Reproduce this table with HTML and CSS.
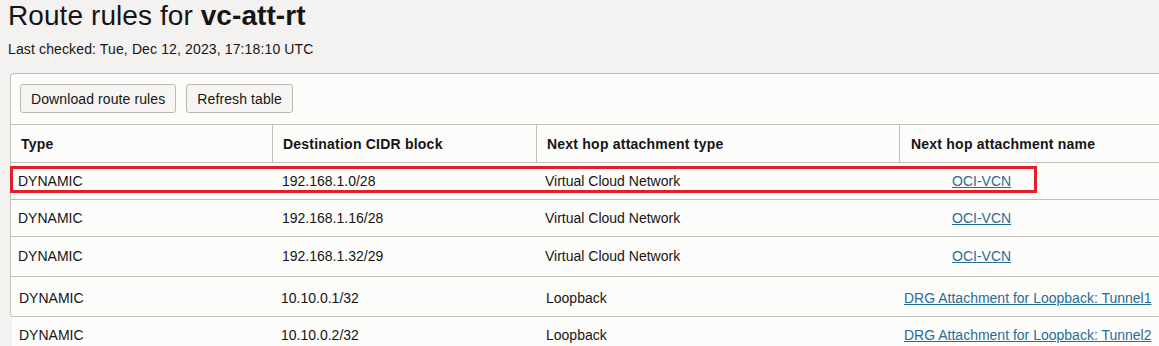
FILE: index.html
```html
<!DOCTYPE html>
<html lang="en">
<head>
  <meta charset="UTF-8" />
  <title>Route rules for vc-att-rt</title>
  <link rel="stylesheet" href="styles.css">
</head>
<body>
  <div class="page-header">
    <h1 class="title">Route rules for <b>vc-att-rt</b></h1>
    <div class="checked">Last checked: Tue, Dec 12, 2023, 17:18:10 UTC</div>
  </div>

  <div class="panel">
    <div class="toolbar">
      <button class="btn">Download route rules</button>
      <button class="btn">Refresh table</button>
    </div>

    <div class="row head">
      <div class="cell">Type</div>
      <div class="cell">Destination CIDR block</div>
      <div class="cell">Next hop attachment type</div>
      <div class="cell">Next hop attachment name</div>
    </div>

    <div class="row vcn short highlighted">
      <div class="cell">DYNAMIC</div>
      <div class="cell">192.168.1.0/28</div>
      <div class="cell">Virtual Cloud Network</div>
      <div class="cell"><a href="#">OCI-VCN</a></div>
      <div class="mark"></div>
    </div>
    <div class="row vcn short">
      <div class="cell">DYNAMIC</div>
      <div class="cell">192.168.1.16/28</div>
      <div class="cell">Virtual Cloud Network</div>
      <div class="cell"><a href="#">OCI-VCN</a></div>
    </div>
    <div class="row vcn tall">
      <div class="cell">DYNAMIC</div>
      <div class="cell">192.168.1.32/29</div>
      <div class="cell">Virtual Cloud Network</div>
      <div class="cell"><a href="#">OCI-VCN</a></div>
    </div>
    <div class="row loop tall">
      <div class="cell">DYNAMIC</div>
      <div class="cell">10.10.0.1/32</div>
      <div class="cell">Loopback</div>
      <div class="cell"><a href="#">DRG Attachment for Loopback: Tunnel1</a></div>
    </div>
  </div>

  <div class="row loop extra">
    <div class="cell">DYNAMIC</div>
    <div class="cell">10.10.0.2/32</div>
    <div class="cell">Loopback</div>
    <div class="cell"><a href="#">DRG Attachment for Loopback: Tunnel2</a></div>
  </div>
</body>
</html>
```

FILE: styles.css
```css
body {
  font-family: "Liberation Sans", Arial, sans-serif;
  margin: 0;
  background-color: #f3f2f1;
  color: #161513;
  overflow: hidden;
}
.page-header {
  padding-left: 8px;
}
.title {
  margin: 0;
  font-size: 28px;
  font-weight: normal;
  line-height: 32px;
  letter-spacing: 0.08px;
}
.checked {
  margin-top: 8px;
  font-size: 14px;
  line-height: 18px;
  letter-spacing: 0.13px;
}
.panel {
  margin: 15px 0 0 10px;
  width: 1200px;
  background-color: #fcfcfb;
  border: 1px solid #c3beb8;
  border-right: none;
  border-bottom: none;
  border-radius: 4px 0 0 4px;
}
.toolbar {
  display: flex;
  gap: 10px;
  padding: 10px 9px 11px;
  border-bottom: 1px solid #c3beb8;
}
.btn {
  height: 29px;
  padding: 0 10px;
  font-family: inherit;
  font-size: 14px;
  letter-spacing: 0.1px;
  color: #161513;
  background-color: #f6f5f3;
  border: 1px solid #bcb7b1;
  border-radius: 3px;
}
.row {
  position: relative;
  display: grid;
  grid-template-columns: 261px 264px 363px 1fr;
  align-items: center;
  box-sizing: border-box;
  font-size: 14px;
  line-height: 16px;
  border-bottom: 1px solid #c3beb8;
}
.row.head {
  height: 38px;
  font-weight: bold;
  letter-spacing: 0.22px;
  align-items: stretch;
}
.row.head .cell {
  display: flex;
  align-items: center;
  padding-left: 10px;
}
.row.head .cell + .cell {
  border-left: 1px solid #c3beb8;
}
.row.head .cell:nth-child(4) {
  padding-left: 11px;
}
.row.short {
  height: 37px;
}
.row.tall {
  height: 40px;
}
.row.vcn.tall {
  padding-bottom: 2px;
}
.row.vcn .cell:nth-child(1) { padding-left: 7px; }
.row.vcn .cell:nth-child(2) { padding-left: 10px; }
.row.vcn .cell:nth-child(3) { padding-left: 9px; }
.row.vcn .cell:nth-child(4) { padding-left: 53px; }
.row.loop {
  padding-top: 3px;
}
.row.loop .cell:nth-child(1) { padding-left: 8px; }
.row.loop .cell:nth-child(2) { padding-left: 9px; }
.row.loop .cell:nth-child(3) { padding-left: 10px; }
.row.loop .cell:nth-child(4) { padding-left: 5px; }
.row.extra {
  margin-left: 12px;
  height: 36px;
  padding-top: 0;
  grid-template-columns: 260px 264px 363px 1fr;
  background-color: #fcfcfb;
  border-bottom: none;
  width: 1200px;
}
.row.extra .cell:nth-child(1) { padding-left: 7px; }
.cell {
  white-space: nowrap;
}
.cell a {
  color: #2a6d94;
  text-decoration: underline;
}
.mark {
  position: absolute;
  left: -1px;
  top: 3px;
  width: 1027px;
  height: 27px;
  box-sizing: border-box;
  border: 3px solid #e01f2b;
}
```
